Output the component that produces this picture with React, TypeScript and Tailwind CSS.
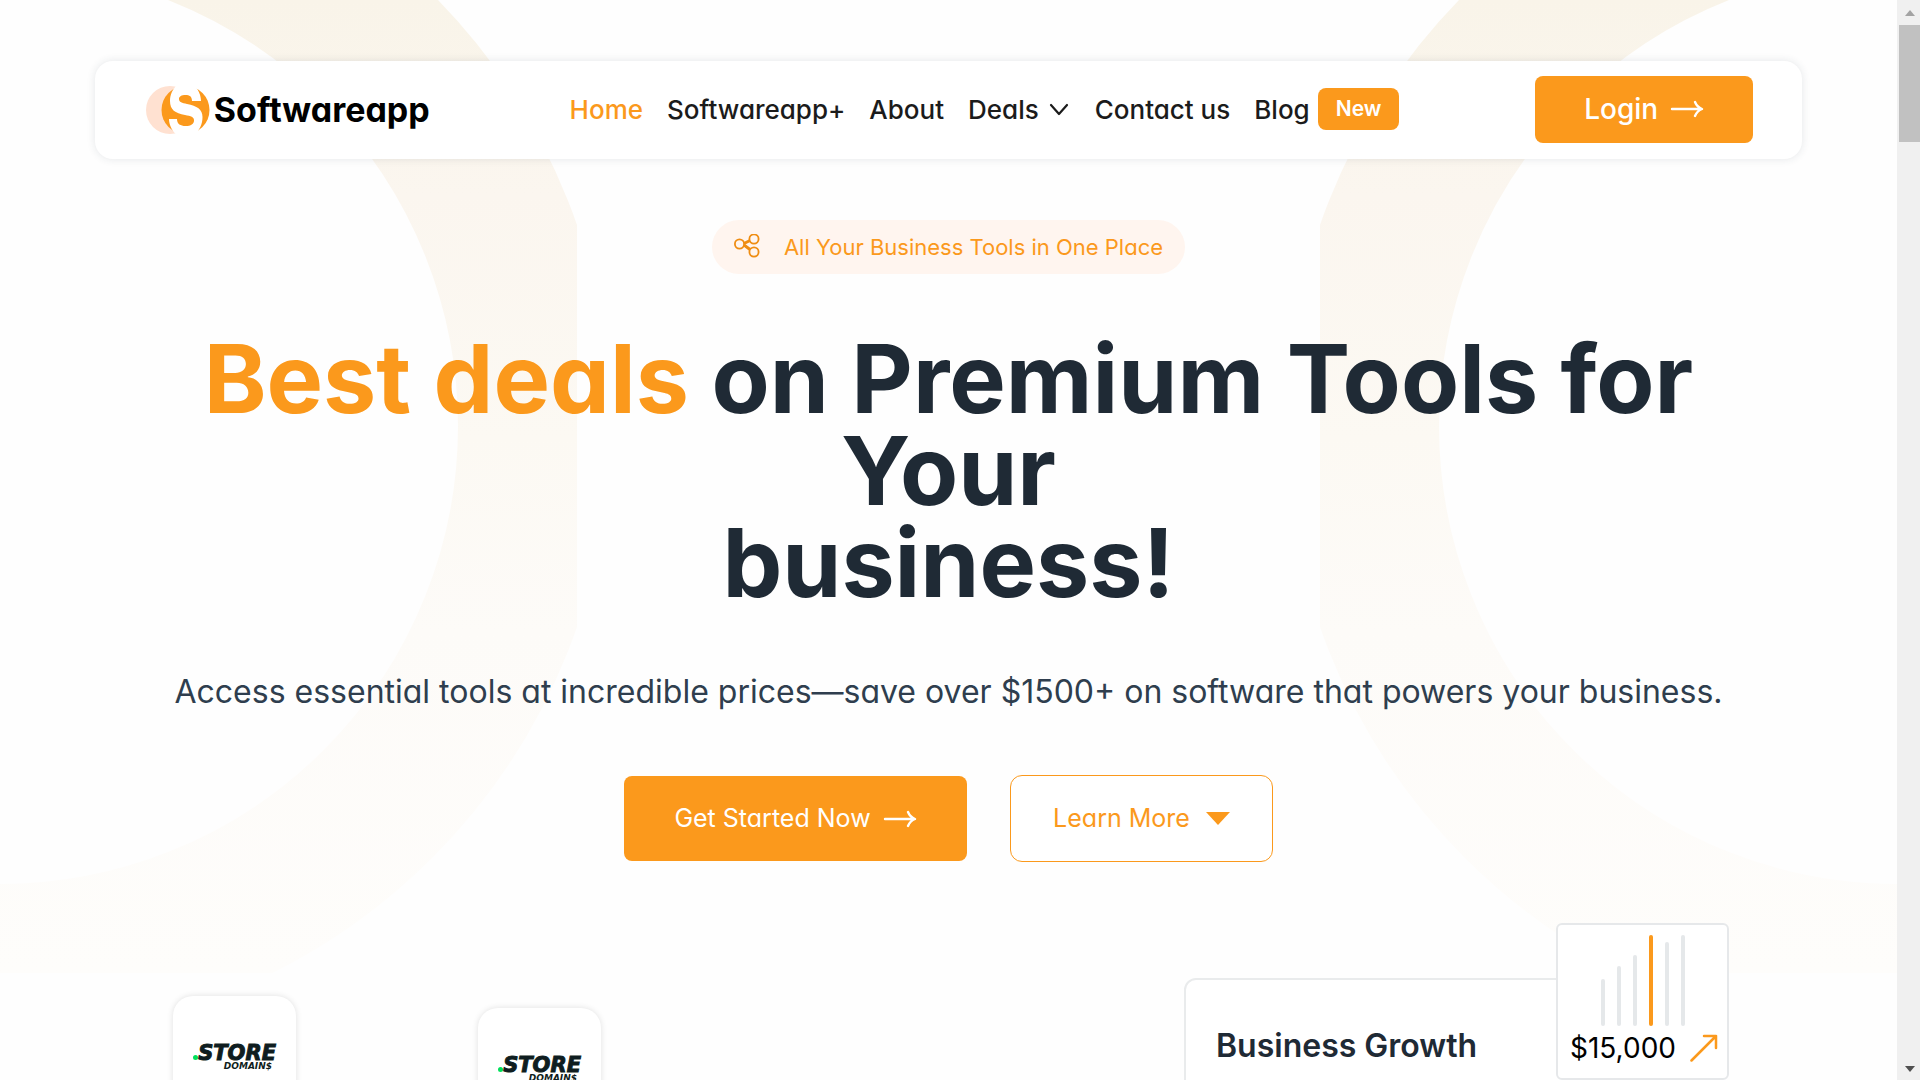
import React from "react";

function LongArrow({ className }: { className: string }) {
  return (
    <svg viewBox="0 0 34 18" className={className} fill="none" stroke="currentColor" strokeWidth="2.4" strokeLinecap="round" strokeLinejoin="round" aria-hidden="true">
      <path d="M2 9h29M25 2q2 5 7 7-5 2-7 7" />
    </svg>
  );
}

function Logo() {
  return (
    <a href="#" className="flex w-[288px] items-center gap-1 pt-0.5 text-black">
      <svg viewBox="0 0 64 48" className="h-12 w-16 shrink-0" aria-hidden="true">
        <circle cx="24" cy="24" r="24" fill="#ffe1d1" />
        <circle cx="39.500" cy="24" r="24" fill="#fb991c" />
        <path
          d="M31 -1H48C52 3 55 9 55 15H46C46 10.500 43.500 9 39.500 9C35.500 9 33 10.500 33 13C33 16 36 17 41 18C51 20 56.500 23 56.500 31C56.500 39 53 45 48 49H31C26 45 23 39 23 33H31C31 38 34.500 40 39.500 40C45 40 48 38 48 34.500C48 31 45 30 39 29C29 27 24 24 24 15C24 8 27 3 31 -1Z"
          fill="#fff"
        />
      </svg>
      <span className="text-[34px] leading-none font-bold">Softwareapp</span>
    </a>
  );
}

const links = ["Home", "Softwareapp+", "About", "Deals", "Contact us", "Blog"];

function Header() {
  return (
    <header className="mx-[5%] mt-[61px] flex h-[98px] items-center justify-between rounded-[18px] bg-white pr-[49px] pb-0.5 pl-[51px] shadow-[0_0_8px_rgba(40,60,70,0.12)]">
      <Logo />
      <nav className="flex items-center gap-6 text-[26px] font-medium text-[#1b1b1b]">
        {links.map((l) => (
          <a key={l} href="#" className={l === "Home" ? "text-[#fb991c]" : "flex items-center gap-2"}>
            {l}
            {l === "Deals" && (
              <svg viewBox="0 0 24 24" className="size-6" fill="none" stroke="currentColor" strokeWidth="2.200" strokeLinecap="round" strokeLinejoin="round" aria-hidden="true">
                <path d="M4 8l8 9 8-9" />
              </svg>
            )}
            {l === "Blog" && <span className="rounded-lg bg-[#fb991c] px-[18px] py-2 text-[21px] leading-[26px] font-semibold text-white">New</span>}
          </a>
        ))}
      </nav>
      <button className="flex h-[67px] w-[218px] items-center justify-center gap-3 rounded-lg bg-[#fb991c] text-[28px] font-medium text-white">
        Login
        <LongArrow className="h-[18px] w-[34px]" />
      </button>
    </header>
  );
}

function Ring({ className, id }: { className: string; id: string }) {
  return (
    <svg viewBox="0 0 577 973" className={className} aria-hidden="true">
      <defs>
        <linearGradient id={id} x1="0" y1="0" x2="0" y2="973" gradientUnits="userSpaceOnUse">
          <stop offset="0" stopColor="#f9f4e9" />
          <stop offset="0.200" stopColor="#fbf6ef" />
          <stop offset="0.450" stopColor="#fcf9f3" />
          <stop offset="0.650" stopColor="#fdfbf8" />
          <stop offset="1" stopColor="#fefdfb" />
        </linearGradient>
      </defs>
      <circle cx="0" cy="426" r="534.500" fill="none" stroke={`url(#${id})`} strokeWidth="153" />
    </svg>
  );
}

function Hero() {
  return (
    <section className="flex flex-col items-center text-center">
      <p className="mt-[61px] flex h-[54px] items-center gap-6 rounded-full bg-[#fff5ef] px-[22px] text-[22px] text-[#fb991c]">
        <svg viewBox="0 0 26 26" className="size-[26px]" fill="none" stroke="#ef8d12" strokeWidth="1.800" aria-hidden="true">
          <circle cx="5.500" cy="10" r="4.600" />
          <circle cx="20" cy="5" r="4.600" />
          <circle cx="20" cy="18" r="4.600" />
          <path d="M10 9.500l6-3M10 11l6 4.500" strokeWidth="3" />
        </svg>
        All Your Business Tools in One Place
      </p>
      <h1 className="mt-[59px] text-[95px] leading-[92px] font-bold text-[#1f2a35]">
        <span className="text-[#fb991c]">Best deals</span> on Premium Tools for
        <br />
        Your
        <br />
        business!
      </h1>
      <p className="mt-[59px] text-[32px] leading-[48px] text-[#2f3e4e]">
        Access essential tools at incredible prices—save over $1500+ on software that powers your business.
      </p>
      <div className="mt-[59px] flex items-center gap-[43px] text-[25px]">
        <button className="flex h-[85px] w-[343px] items-center justify-center gap-3 rounded-lg bg-[#fb991c] text-white">
          Get Started Now
          <LongArrow className="h-[18px] w-[34px]" />
        </button>
        <button className="flex h-[87px] w-[263px] items-center justify-center gap-4 rounded-xl border border-[#fb991c] bg-white text-[#fb991c]">
          Learn More
          <svg viewBox="0 0 24 13" className="h-[13px] w-6" fill="currentColor" aria-hidden="true">
            <path d="M0 0h24L12 13z" />
          </svg>
        </button>
      </div>
    </section>
  );
}

function StoreCard({ className }: { className: string }) {
  return (
    <div className={className}>
      <div className="mt-[49px] flex flex-col items-end pr-5 font-['DejaVu_Sans',sans-serif] font-bold text-[#0f1d20] italic">
        <div className="flex items-baseline">
          <span className="size-[5px] rounded-full bg-[#00e05a]" />
          <span className="text-[21px] leading-4 [-webkit-text-stroke:1px_#0f1d20]">STORE</span>
        </div>
        <span className="pr-1 text-[9px] leading-[10px]">DOMAIN$</span>
      </div>
    </div>
  );
}

const bars = [47, 60, 71, 91, 84, 91];

function Growth() {
  return (
    <div className="relative mr-[195px] h-[200px] w-[518px] rounded-t-[12px] border-2 border-[#e9ebec] bg-white pt-[46px] pl-[30px]">
      <h2 className="text-[32px] leading-10 font-semibold text-[#1f2a35]">Business Growth</h2>
      <div className="absolute -top-[57px] -right-[29px] h-[157px] w-[173px] rounded-md border-2 border-[#e6e8ea] bg-white pt-[10px]">
        <div className="flex h-[91px] items-end justify-center gap-3">
          {bars.map((h, i) => (
            <span key={i} className={i === 3 ? "w-1 rounded-full bg-[#fb991c]" : "w-1 rounded-full bg-[#e5e8ea]"} style={{ height: h }} />
          ))}
        </div>
        <div className="mt-1 flex items-center justify-between pr-[9px] pl-3 text-[28px] leading-9 text-black">
          $15,000
          <svg viewBox="0 0 28 28" className="size-7" fill="none" stroke="#fb991c" strokeWidth="2.500" strokeLinecap="round" strokeLinejoin="round" aria-hidden="true">
            <path d="M1.500 26.500L26 2M14 2h12v12" />
          </svg>
        </div>
      </div>
    </div>
  );
}

function Scrollbar() {
  return (
    <div className="flex h-full w-[23px] shrink-0 flex-col items-center justify-between bg-[#f0f0f0] pl-0.5" aria-hidden="true">
      <div className="flex w-full flex-col items-center">
        <svg viewBox="0 0 12 25" className="h-[25px] w-3" fill="#a3a3a3"><path d="M1 16l5-6 5 6z" /></svg>
        <div className="h-[117px] w-full bg-[#c1c1c1]" />
      </div>
      <svg viewBox="0 0 12 25" className="h-[25px] w-3" fill="#505050"><path d="M1 11l5 6 5-6z" /></svg>
    </div>
  );
}

export default function App() {
  return (
    <div className="flex h-screen overflow-hidden bg-[#fefefe] font-[Inter,sans-serif] [font-feature-settings:'cv11']">
      <main className="relative min-w-0 flex-1 overflow-hidden">
        <Ring id="ring-left" className="absolute top-0 left-0 h-[973px] w-[577px]" />
        <Ring id="ring-right" className="absolute top-0 right-0 h-[973px] w-[577px] -scale-x-100" />
        <div className="relative flow-root">
          <Header />
          <Hero />
          <div className="mt-[116px] flex items-start justify-between">
            <div className="ml-[173px] flex items-start gap-[182px] pt-[18px]">
              <StoreCard className="flex h-[124px] w-[123px] justify-end rounded-[20px] bg-white shadow-[0_0_6px_rgba(0,0,0,0.12)]" />
              <StoreCard className="mt-3 flex h-[124px] w-[123px] justify-end rounded-[20px] bg-white shadow-[0_0_6px_rgba(0,0,0,0.12)]" />
            </div>
            <Growth />
          </div>
        </div>
      </main>
      <Scrollbar />
    </div>
  );
}
